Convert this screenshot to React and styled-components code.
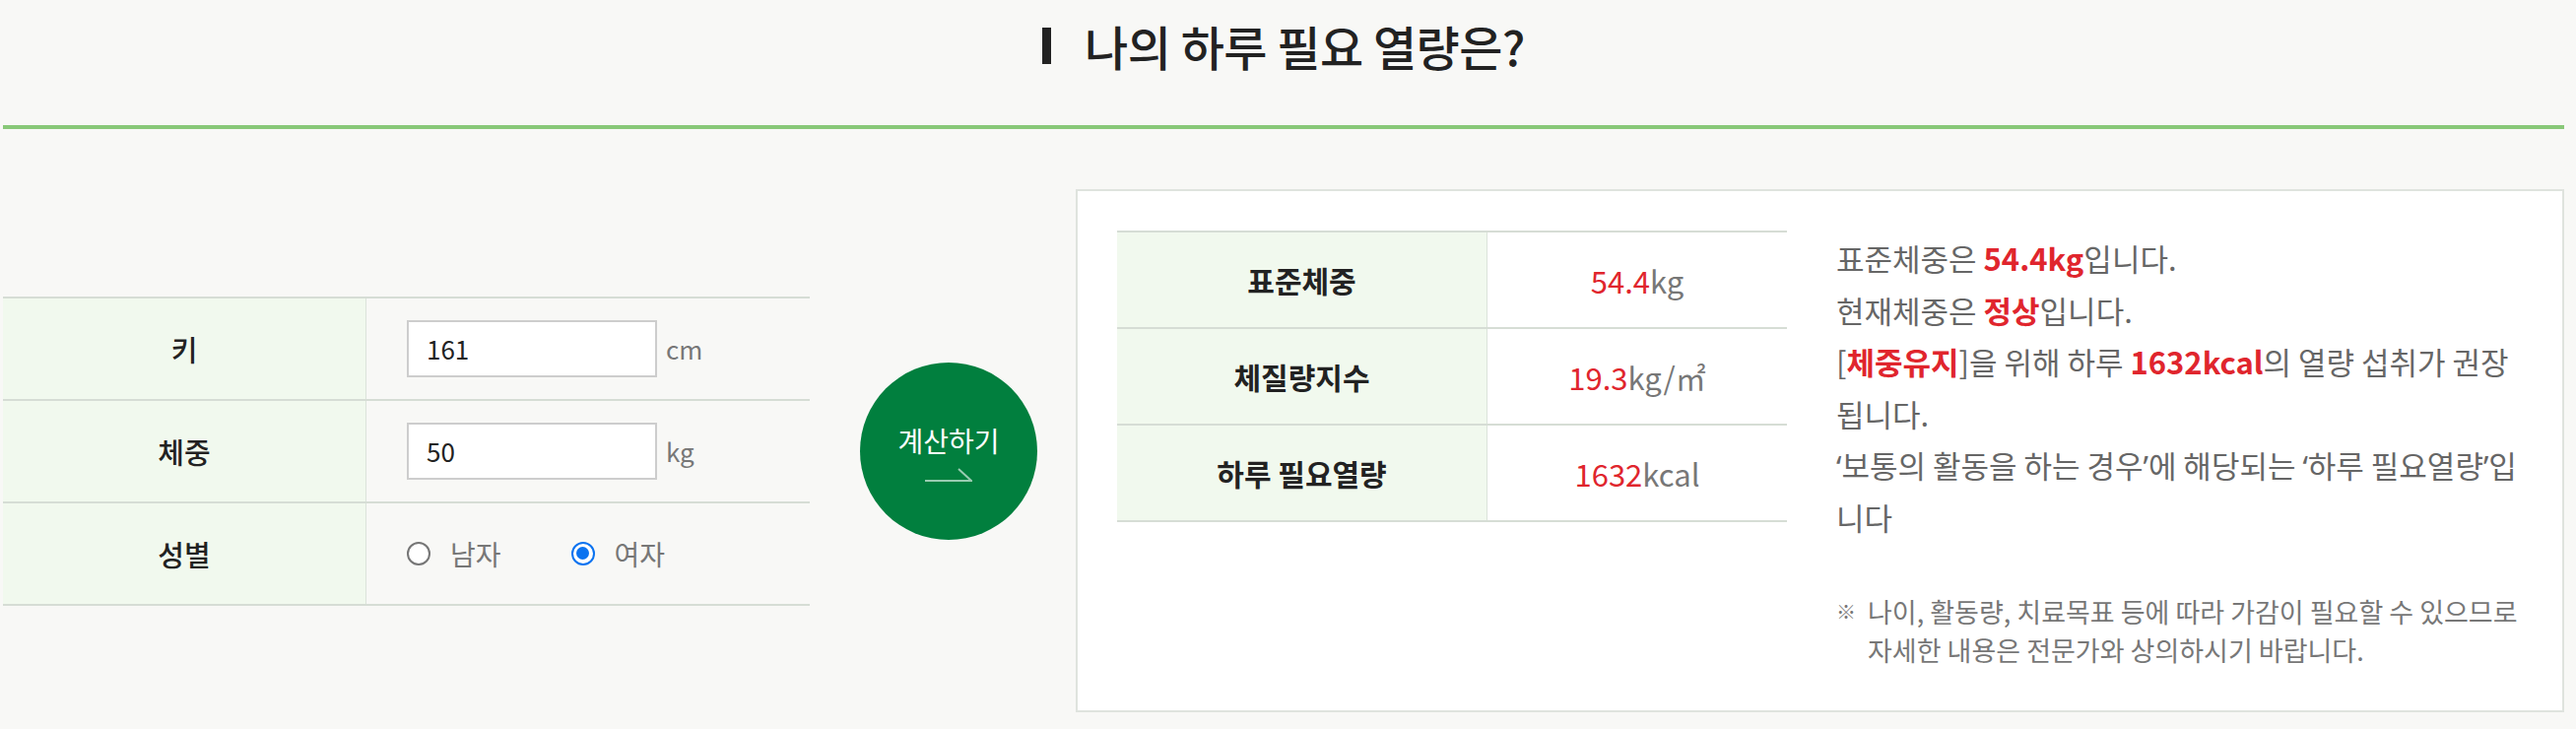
import React from 'react';
import styled, { createGlobalStyle } from 'styled-components';

const GlobalStyle = createGlobalStyle`
  html, body {
    margin: 0;
    padding: 0;
    background: #f8f8f6;
  }
  body {
    font-family: "Noto Sans CJK KR", "Noto Sans", sans-serif;
    color: #222;
  }
`

const Page = styled.div`
  width: 2600px;
  margin-left: 3px;
`

const Header = styled.header`
  height: 131px;
  box-sizing: border-box;
  padding-top: 12px;
  border-bottom: 4px solid #88c878;
  display: flex;
  justify-content: center;
`

const Title = styled.h2`
  margin: 0;
  display: flex;
  align-items: center;
  gap: 34px;
  height: 68px;
  font-size: 48px;
  font-weight: 500;
  letter-spacing: -0.5px;
  color: #222;
  &::before {
    content: '';
    width: 9px;
    height: 37px;
    background: #222;
  }
`

const Main = styled.section`
  display: flex;
  align-items: center;
  margin-top: 61px;
`

const FormTable = styled.div`
  width: 819px;
  flex-shrink: 0;
  border-top: 2px solid #d6ddd5;
`

const Row = styled.div`
  display: flex;
  height: ${p => p.$h}px;
  border-bottom: 2px solid #d6ddd5;
`

const Label = styled.div`
  width: ${p => p.$w}px;
  flex-shrink: 0;
  display: flex;
  align-items: center;
  justify-content: center;
  background: #f1f9ee;
  border-right: 1px solid #dbe3da;
  font-size: ${p => p.$size}px;
  font-weight: ${p => p.$bold ? 700 : 500};
  color: #222;
`

const Field = styled.div`
  flex: 1;
  display: flex;
  align-items: center;
  justify-content: ${p => p.$center ? 'center' : 'flex-start'};
  padding-left: ${p => p.$center ? 0 : 41}px;
  background: ${p => p.$bg || 'transparent'};
`

const Input = styled.input`
  width: 254px;
  height: 58px;
  box-sizing: border-box;
  border: 2px solid #cdcdcd;
  background: #fff;
  padding: 0 18px;
  font-family: inherit;
  font-size: 26px;
  color: #222;
  outline: none;
`

const Unit = styled.span`
  margin-left: 9px;
  font-size: 26px;
  color: #777;
`

const RadioLabel = styled.label`
  display: flex;
  align-items: center;
  gap: 20px;
  margin-right: 71px;
  font-size: 28px;
  color: #777;
`

const RadioDot = styled.span`
  width: 24px;
  height: 24px;
  box-sizing: border-box;
  border-radius: 50%;
  border: 2px solid ${p => p.$on ? '#0b73f0' : '#767676'};
  background: #fff;
  display: flex;
  align-items: center;
  justify-content: center;
  &::after {
    content: '';
    width: 13px;
    height: 13px;
    border-radius: 50%;
    background: ${p => p.$on ? '#0b73f0' : 'transparent'};
  }
`

const CalcButton = styled.button`
  width: 180px;
  height: 180px;
  margin: 0 39px 0 51px;
  flex-shrink: 0;
  border: none;
  border-radius: 50%;
  background: #017f3e;
  color: #fff;
  font-family: inherit;
  font-size: 28px;
  display: flex;
  flex-direction: column;
  align-items: center;
  justify-content: center;
  gap: 8px;
  padding: 0;
`

const ResultBox = styled.div`
  flex: 1;
  min-width: 0;
  display: flex;
  align-items: flex-start;
  background: #fff;
  border: 2px solid #dfe3de;
  padding: 40px 38px 42px 40px;
`

const ResultTable = styled.div`
  width: 680px;
  flex-shrink: 0;
  border-top: 2px solid #d6ddd5;
`

const Value = styled.span`
  font-size: 31px;
  color: #777;
  b {
    font-weight: 400;
    color: #e0252d;
  }
`

const Desc = styled.div`
  flex: 1;
  margin-left: 50px;
  padding-top: 2px;
`

const Para = styled.p`
  margin: 0;
  font-size: 31px;
  line-height: 52.5px;
  white-space: nowrap;
  color: #666;
  b {
    color: #e0252d;
    font-weight: 700;
  }
`

// the CJK font draws curly quotes full width; the page shows narrow ones
const Q = styled.span`
  font-family: "Noto Sans", sans-serif;
  line-height: 1;
`

const Note = styled.div`
  display: flex;
  margin-top: 50px;
  font-size: 27px;
  line-height: 39px;
  color: #777;
`

const Mark = styled.span`
  width: 32px;
  flex-shrink: 0;
  font-size: 20px;
`

const results = [
  { label: '표준체중', num: '54.4', unit: 'kg' },
  { label: '체질량지수', num: '19.3', unit: 'kg/㎡' },
  { label: '하루 필요열량', num: '1632', unit: 'kcal' },
]

export default function App() {
  return (
    <>
      <GlobalStyle />
      <Page>
        <Header>
          <Title>나의 하루 필요 열량은?</Title>
        </Header>
        <Main>
          <FormTable>
            <Row $h={102}>
              <Label $w={368} $size={29}>키</Label>
              <Field>
                <Input defaultValue="161" />
                <Unit>cm</Unit>
              </Field>
            </Row>
            <Row $h={102}>
              <Label $w={368} $size={29}>체중</Label>
              <Field>
                <Input defaultValue="50" />
                <Unit>kg</Unit>
              </Field>
            </Row>
            <Row $h={102}>
              <Label $w={368} $size={29}>성별</Label>
              <Field>
                <RadioLabel><RadioDot />남자</RadioLabel>
                <RadioLabel><RadioDot $on />여자</RadioLabel>
              </Field>
            </Row>
          </FormTable>

          <CalcButton>
            계산하기
            <svg width="48" height="14" viewBox="0 0 48 14">
              <path d="M0 13 H47 L34 1" fill="none" stroke="rgba(255,255,255,0.6)" strokeWidth="2" />
            </svg>
          </CalcButton>

          <ResultBox>
            <ResultTable>
              {results.map(r => (
                <Row $h={96} key={r.label}>
                  <Label $w={375} $size={30} $bold>{r.label}</Label>
                  <Field $bg="#fff" $center>
                    <Value><b>{r.num}</b>{r.unit}</Value>
                  </Field>
                </Row>
              ))}
            </ResultTable>
            <Desc>
              <Para>표준체중은 <b>54.4kg</b>입니다.</Para>
              <Para>현재체중은 <b>정상</b>입니다.</Para>
              <Para>[<b>체중유지</b>]을 위해 하루 <b>1632kcal</b>의 열량 섭취가 권장<br />됩니다.</Para>
              <Para>
                <Q>‘</Q>보통의 활동을 하는 경우<Q>’</Q>에 해당되는 <Q>‘</Q>하루 필요열량<Q>’</Q>입<br />니다
              </Para>
              <Note>
                <Mark>※</Mark>
                <span>나이, 활동량, 치료목표 등에 따라 가감이 필요할 수 있으므로<br />자세한 내용은 전문가와 상의하시기 바랍니다.</span>
              </Note>
            </Desc>
          </ResultBox>
        </Main>
      </Page>
    </>
  );
}
